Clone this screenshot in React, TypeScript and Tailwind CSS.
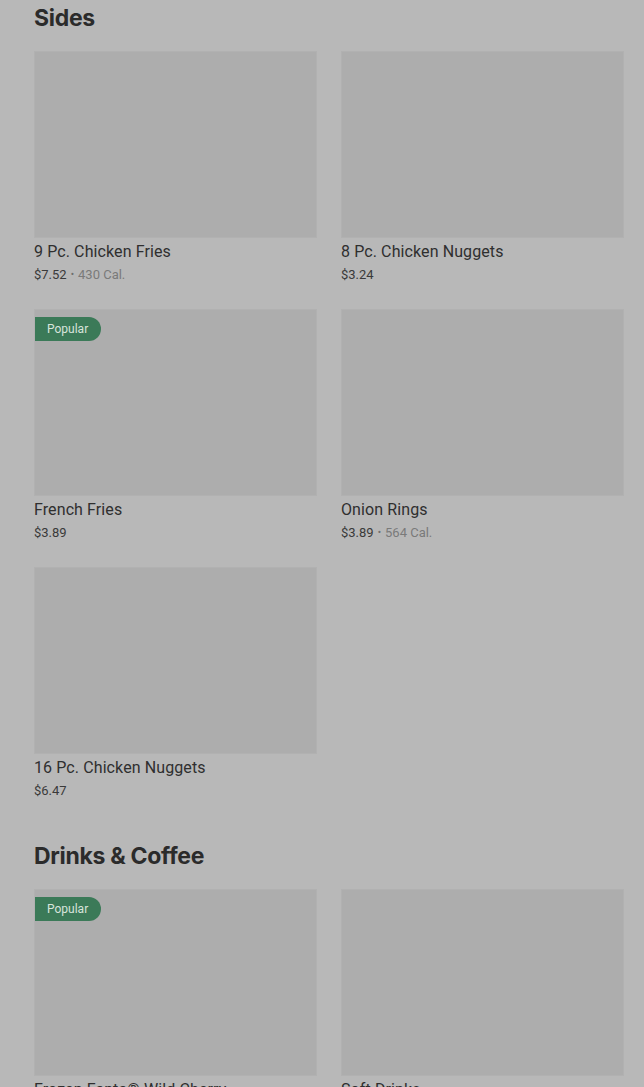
type Item = {
  name: string;
  price: string;
  cal?: string;
  popular?: boolean;
};

const sections: { title: string; items: Item[] }[] = [
  {
    title: "Sides",
    items: [
      { name: "9 Pc. Chicken Fries", price: "$7.52", cal: "430 Cal." },
      { name: "8 Pc. Chicken Nuggets", price: "$3.24" },
      { name: "French Fries", price: "$3.89", popular: true },
      { name: "Onion Rings", price: "$3.89", cal: "564 Cal." },
      { name: "16 Pc. Chicken Nuggets", price: "$6.47" },
    ],
  },
  {
    title: "Drinks & Coffee",
    items: [
      { name: "Frozen Fanta® Wild Cherry", price: "$2.99", popular: true },
      { name: "Soft Drinks", price: "$2.39" },
    ],
  },
];

const MenuCard = ({ item }: { item: Item }) => {
  return (
    <div className="flex flex-col">
      <div className="relative h-[187px] bg-[#adadad] border border-[#b1b1b1]">
        {item.popular && (
          <span className="absolute left-0 top-[7px] h-[24px] pl-[12px] pr-[13px] flex items-center rounded-r-full bg-[#3b7a58] text-[12px] text-[#d8e4dc] font-['Roboto',sans-serif]">
            Popular
          </span>
        )}
      </div>
      <div className="mt-[4px] text-[16px] leading-[20px] text-[#2f2f2f] font-['Roboto',sans-serif] tracking-[0.1px]">
        {item.name}
      </div>
      <div className="mt-[4px] text-[13px] leading-[18px] font-['Roboto',sans-serif] flex items-center">
        <span className="text-[#3a3a3a]">{item.price}</span>
        {item.cal && (
          <>
            <span className="text-[#6f6f6f] text-[10px] mx-[4px]">•</span>
            <span className="text-[#7a7a7a]">{item.cal}</span>
          </>
        )}
      </div>
    </div>
  );
};

export default function App() {
  return (
    <div className="h-[1087px] overflow-hidden bg-[#b8b8b8] pl-[34px] pr-[20px] pt-[2px]">
      {sections.map((section) => (
        <section key={section.title} className="mb-[40px]">
          <h2 className="text-[23px] leading-[32px] font-bold text-[#2b2b2b] font-['Inter',sans-serif] tracking-[-0.3px]">
            {section.title}
          </h2>
          <div className="mt-[17px] grid grid-cols-2 gap-x-[24px] gap-y-[25px]">
            {section.items.map((item) => (
              <MenuCard key={item.name} item={item} />
            ))}
          </div>
        </section>
      ))}
    </div>
  );
}
